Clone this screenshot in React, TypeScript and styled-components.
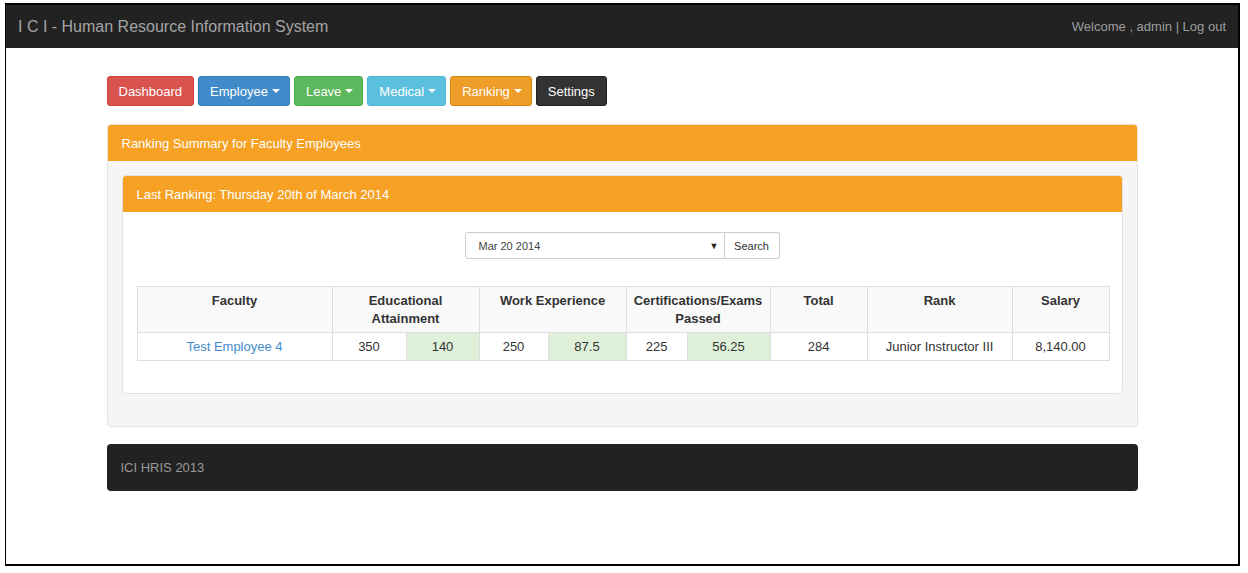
import React from "react";
import styled, { createGlobalStyle } from "styled-components";

const Global = createGlobalStyle`
  html, body { margin: 0; padding: 0; background: #fff; }
  body { font-family: "Liberation Sans", Arial, sans-serif; font-size: 13px; color: #333; }
  * { box-sizing: border-box; }
`;

const Frame = styled.div`
  margin: 3px 0 0 5px;
  width: 1235px;
  height: 563px;
  border: 2px solid #000;
  border-left-width: 1px;
  background: #fff;
  overflow: hidden;
`;

const Navbar = styled.div`
  height: 43px;
  background: #222;
  display: flex;
  align-items: center;
  justify-content: space-between;
  padding: 0 12px 0 12px;
`;

const Brand = styled.div`
  font-size: 16px;
  color: #a4a4a4;
`;

const UserBox = styled.div`
  font-size: 13px;
  color: #9d9d9d;
`;

const Container = styled.div`
  width: 1031px;
  margin: 28px auto 0;
`;

const NavRow = styled.div`
  display: flex;
  gap: 4px;
`;

const NavButton = styled.div<{ $bg: string; $border: string; $drop?: boolean }>`
  height: 30px;
  padding: ${(p) => (p.$drop ? "0 9px 0 11px" : "0 11px")};
  display: flex;
  align-items: center;
  gap: 4px;
  font-size: 13px;
  color: #fff;
  background: ${(p) => p.$bg};
  border: 1px solid ${(p) => p.$border};
  border-radius: 3px;
`;

const Caret = styled.span`
  display: inline-block;
  width: 0;
  height: 0;
  border-left: 4px solid transparent;
  border-right: 4px solid transparent;
  border-top: 4px solid #fff;
`;

const Panel = styled.div<{ $mb: number }>`
  border: 1px solid #e7e2da;
  border-radius: 4px;
  margin-bottom: ${(p) => p.$mb}px;
  overflow: hidden;
`;

const OuterPanel = styled(Panel)`
  margin-top: 18px;
  background: #f5f5f5;
`;

const InnerPanel = styled(Panel)`
  background: #fff;
  border-color: #e2e2e2;
`;

const PanelHeading = styled.div`
  background: #f6a123;
  color: #fff;
  font-size: 13px;
  height: 36px;
  padding: 0 14px;
  display: flex;
  align-items: center;
`;

const OuterBody = styled.div`
  padding: 14px 14px 14px;
`;

const InnerBody = styled.div`
  padding: 20px 14px 15px;
`;

const SearchRow = styled.div`
  display: flex;
  justify-content: center;
  margin-bottom: 27px;
`;

const SelectBox = styled.div`
  width: 260px;
  height: 27px;
  border: 1px solid #ccc;
  border-radius: 3px 0 0 3px;
  display: flex;
  align-items: center;
  justify-content: space-between;
  padding: 0 5px 0 13px;
  font-size: 11px;
  color: #444;
`;

const Arrow = styled.span`
  font-size: 9px;
  color: #222;
`;

const SearchBtn = styled.div`
  width: 55px;
  height: 27px;
  border: 1px solid #ccc;
  border-left: none;
  border-radius: 0 3px 3px 0;
  display: flex;
  align-items: center;
  justify-content: center;
  font-size: 11px;
  color: #333;
`;

const Table = styled.table`
  width: 972px;
  table-layout: fixed;
  border-collapse: collapse;
  margin-bottom: 17px;
  font-size: 13px;
`;

const Th = styled.th`
  background: #f9f9f9;
  border: 1px solid #dedede;
  font-weight: bold;
  color: #333;
  padding: 5px 4px 4px;
  line-height: 18px;
  vertical-align: top;
  height: 45px;
`;

const Td = styled.td<{ $hl?: boolean }>`
  border: 1px solid #dedede;
  background: ${(p) => (p.$hl ? "#dff0d8" : "#fff")};
  text-align: center;
  color: #333;
  height: 28px;
  padding: 0 4px;
  white-space: nowrap;
`;

const Link = styled.span`
  color: #428bca;
`;

const Footer = styled.div`
  height: 47px;
  background: #222;
  border-radius: 4px;
  color: #999;
  font-size: 13px;
  padding: 0 14px;
  display: flex;
  align-items: center;
`;

const colWidths = [195, 74, 73, 69, 78, 61, 83, 97, 145, 97];

export default function App() {
  return (
    <>
      <Global />
      <Frame>
        <Navbar>
          <Brand>I C I - Human Resource Information System</Brand>
          <UserBox>Welcome , admin | Log out</UserBox>
        </Navbar>
        <Container>
          <NavRow>
            <NavButton $bg="#d9534f" $border="#d43f3a">Dashboard</NavButton>
            <NavButton $drop $bg="#428bca" $border="#357ebd">Employee<Caret /></NavButton>
            <NavButton $drop $bg="#5cb85c" $border="#4cae4c">Leave<Caret /></NavButton>
            <NavButton $drop $bg="#5bc0de" $border="#46b8da">Medical<Caret /></NavButton>
            <NavButton $drop $bg="#ee9d28" $border="#d58512">Ranking<Caret /></NavButton>
            <NavButton $bg="#333333" $border="#222">Settings</NavButton>
          </NavRow>
          <OuterPanel $mb={17}>
            <PanelHeading>Ranking Summary for Faculty Employees</PanelHeading>
            <OuterBody>
              <InnerPanel $mb={18}>
                <PanelHeading>Last Ranking: Thursday 20th of March 2014</PanelHeading>
                <InnerBody>
                  <SearchRow>
                    <SelectBox>
                      <span>Mar 20 2014</span>
                      <Arrow>▼</Arrow>
                    </SelectBox>
                    <SearchBtn>Search</SearchBtn>
                  </SearchRow>
                  <Table>
                    <colgroup>
                      {colWidths.map((w, i) => (
                        <col key={i} style={{ width: w }} />
                      ))}
                    </colgroup>
                    <thead>
                      <tr>
                        <Th>Faculty</Th>
                        <Th colSpan={2}>Educational Attainment</Th>
                        <Th colSpan={2}>Work Experience</Th>
                        <Th colSpan={2}>Certifications/Exams Passed</Th>
                        <Th>Total</Th>
                        <Th>Rank</Th>
                        <Th>Salary</Th>
                      </tr>
                    </thead>
                    <tbody>
                      <tr>
                        <Td><Link>Test Employee 4</Link></Td>
                        <Td>350</Td>
                        <Td $hl>140</Td>
                        <Td>250</Td>
                        <Td $hl>87.5</Td>
                        <Td>225</Td>
                        <Td $hl>56.25</Td>
                        <Td>284</Td>
                        <Td>Junior Instructor III</Td>
                        <Td>8,140.00</Td>
                      </tr>
                    </tbody>
                  </Table>
                </InnerBody>
              </InnerPanel>
            </OuterBody>
          </OuterPanel>
          <Footer>ICI HRIS 2013</Footer>
        </Container>
      </Frame>
    </>
  );
}
